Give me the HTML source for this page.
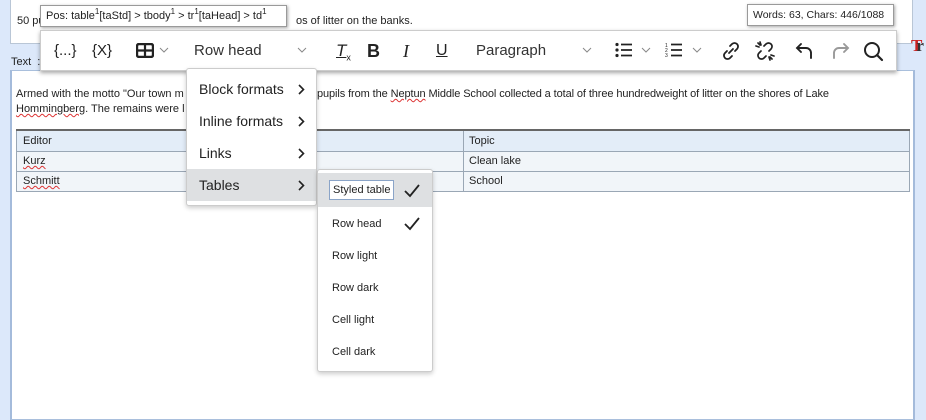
<!DOCTYPE html>
<html><head><meta charset="utf-8"><style>
*{box-sizing:border-box;margin:0;padding:0}
body{width:926px;height:416px;overflow:hidden;background:#dce8fa;font-family:"Liberation Sans",sans-serif;position:relative;color:#222}
.abs{position:absolute}
.top{left:10px;top:-2px;width:903px;height:46px;background:#fff;border:1px solid #b9c6d6}
.ed{left:10px;top:70px;width:905px;height:350px;background:#fff;border:1px solid #a9bfdc;border-left:2px solid #a4bbdb;border-right:2px solid #a4bbdb}
.s{font-size:11px;color:#222;white-space:nowrap}
.tip{background:#fff;border:1px solid #9a9a9a;box-shadow:1px 1px 3px rgba(0,0,0,.35);font-size:11px;padding:0 5px;height:22px;line-height:21px;white-space:nowrap}
.tip sup{font-size:8px;line-height:0;vertical-align:5px}
.tb{left:40px;top:30px;width:857px;height:41px;background:#fff;border:1px solid #ccc;box-shadow:0 2px 4px rgba(0,0,0,.35)}
.tb .i{position:absolute;top:0;height:40px;line-height:40px;font-size:15px;color:#222}
.sq{text-decoration:underline wavy #d33;text-decoration-thickness:1px}
table{border-collapse:collapse;font-size:11px}
.menu{background:#fff;border:1px solid #ccc;border-radius:3px;box-shadow:0 2px 5px rgba(0,0,0,.2)}
.mi{position:absolute;left:0;right:0;height:32px;line-height:32px;font-size:14px;color:#222;padding-left:12px}
.mi svg{position:absolute;right:11px;top:11px}
.si{position:absolute;left:0;right:0;height:32px;line-height:32px;font-size:11px;padding-left:14px}
</style></head><body>
<div class="abs top"></div>
<div class="abs s" style="left:17px;top:15px">50 pu</div>
<div class="abs s" style="left:296px;top:15px">os of litter on the banks.</div>
<div class="abs tip" style="left:40px;top:5px;width:247px">Pos: table<sup>1</sup>[taStd] &gt; tbody<sup>1</sup> &gt; tr<sup>1</sup>[taHead] &gt; td<sup>1</sup></div>
<div class="abs tip" style="left:747px;top:4px;width:147px;font-size:10.5px">Words: 63, Chars: 446/1088</div>
<div class="abs s" style="left:11px;top:56px">Text &nbsp;:</div>
<div class="abs ed"></div>
<div class="abs s" style="left:16px;top:88px">Armed with the motto "Our town m</div>
<div class="abs s" style="left:317px;top:88px;letter-spacing:-0.1px">pupils from the <span class="sq">Neptun</span> Middle School collected a total of three hundredweight of litter on the shores of Lake</div>
<div class="abs s" style="left:16px;top:103px"><span class="sq">Hommingberg</span>. The remains were l</div>
<table class="abs" style="left:16px;top:129px;width:894px">
<tr style="background:#e3edf8;height:21px"><td style="padding-left:6px;border:1px solid #9aa7b5;border-top:2px solid #666;width:447px">Editor</td><td style="padding-left:5px;border:1px solid #9aa7b5;border-top:2px solid #666">Topic</td></tr>
<tr style="background:#f1f5f9;height:20px"><td style="padding-left:6px;border:1px solid #9aa7b5"><span class="sq">Kurz</span></td><td style="padding-left:5px;border:1px solid #9aa7b5">Clean lake</td></tr>
<tr style="background:#f1f5f9;height:20px"><td style="padding-left:6px;border:1px solid #9aa7b5"><span class="sq">Schmitt</span></td><td style="padding-left:5px;border:1px solid #9aa7b5">School</td></tr>
</table>
<div class="abs" style="left:911px;top:36px;font:bold 17px 'Liberation Serif',serif;color:#c22">T<span style="color:#333;margin-left:-6px">r</span></div>
<div class="abs tb">
<span class="i" style="left:13px">{...}</span>
<span class="i" style="left:51px">{X}</span>
<svg class="abs" style="left:95px;top:12px" width="18" height="15"><rect x="1" y="1" width="16" height="13" rx="2" fill="none" stroke="#222" stroke-width="2.4"/><path d="M1 7.5H17M9 1V14" stroke="#222" stroke-width="2.2"/></svg>
<svg class="abs" style="left:118px;top:16px" width="10" height="7"><path d="M1 1l4 4 4-4" stroke="#888" fill="none"/></svg>
<span class="i" style="left:153px;color:#333">Row head</span>
<svg class="abs" style="left:256px;top:16px" width="10" height="7"><path d="M1 1l4 4 4-4" stroke="#888" fill="none"/></svg>
<span class="i" style="left:295px;font-style:italic;text-decoration:underline;font-size:17px">T<sub style="font-size:9px;font-style:normal">x</sub></span>
<span class="i" style="left:326px;font-weight:bold;font-size:18px">B</span>
<span class="i" style="left:362px;font-style:italic;font-size:18px;font-family:'Liberation Serif',serif">I</span>
<span class="i" style="left:395px;text-decoration:underline;font-size:16px">U</span>
<span class="i" style="left:435px;color:#333">Paragraph</span>
<svg class="abs" style="left:541px;top:16px" width="10" height="7"><path d="M1 1l4 4 4-4" stroke="#888" fill="none"/></svg>
<svg class="abs" style="left:574px;top:11px" width="18" height="16"><g fill="#222"><circle cx="2" cy="2.5" r="1.6"/><circle cx="2" cy="8" r="1.6"/><circle cx="2" cy="13.5" r="1.6"/></g><path d="M6 2.5h11M6 8h11M6 13.5h11" stroke="#222" stroke-width="1.8"/></svg>
<svg class="abs" style="left:600px;top:16px" width="10" height="7"><path d="M1 1l4 4 4-4" stroke="#888" fill="none"/></svg>
<svg class="abs" style="left:624px;top:11px" width="18" height="16"><text x="0" y="5" font-size="5" fill="#222">1</text><text x="0" y="10" font-size="5" fill="#222">2</text><text x="0" y="15" font-size="5" fill="#222">3</text><path d="M6 2.5h11M6 8h11M6 13.5h11" stroke="#222" stroke-width="1.8"/></svg>
<svg class="abs" style="left:651px;top:16px" width="10" height="7"><path d="M1 1l4 4 4-4" stroke="#888" fill="none"/></svg>
<svg class="abs" style="left:680px;top:10px" width="20" height="20"><path d="M8 12l4-4M9 5l2-2a3.5 3.5 0 015 5l-2 2M11 15l-2 2a3.5 3.5 0 01-5-5l2-2" stroke="#222" stroke-width="1.8" fill="none" stroke-linecap="round"/></svg>
<svg class="abs" style="left:713px;top:9px" width="22" height="22"><path d="M10 6l2-2a3.5 3.5 0 015 5l-2 2M12 16l-2 2a3.5 3.5 0 01-5-5l2-2M6 2l1 3M2 6l3 1M16 20l-1-3M20 16l-3-1M4 3l2 2M18 19l-2-2" stroke="#222" stroke-width="1.7" fill="none" stroke-linecap="round"/></svg>
<svg class="abs" style="left:754px;top:11px" width="20" height="18"><path d="M6 2L2 6l4 4M2 6h9a5 5 0 015 5v5" stroke="#222" stroke-width="1.9" fill="none" stroke-linecap="round"/></svg>
<svg class="abs" style="left:789px;top:11px" width="20" height="18"><path d="M14 2l4 4-4 4M18 6H9a5 5 0 00-5 5v5" stroke="#999" stroke-width="1.9" fill="none" stroke-linecap="round"/></svg>
<svg class="abs" style="left:822px;top:10px" width="22" height="22"><circle cx="9" cy="9" r="7" stroke="#222" stroke-width="2" fill="none"/><path d="M14 14l5 5" stroke="#222" stroke-width="2.2" stroke-linecap="round"/></svg>
</div>
<div class="abs menu" style="left:186px;top:68px;width:131px;height:138px">
<div class="mi" style="top:4px">Block formats<svg width="7" height="11"><path d="M1 1l4.5 4.5L1 10" stroke="#222" stroke-width="1.6" fill="none"/></svg></div>
<div class="mi" style="top:36px">Inline formats<svg width="7" height="11"><path d="M1 1l4.5 4.5L1 10" stroke="#222" stroke-width="1.6" fill="none"/></svg></div>
<div class="mi" style="top:68px">Links<svg width="7" height="11"><path d="M1 1l4.5 4.5L1 10" stroke="#222" stroke-width="1.6" fill="none"/></svg></div>
<div class="mi" style="top:100px;background:#dee0e2">Tables<svg width="7" height="11"><path d="M1 1l4.5 4.5L1 10" stroke="#222" stroke-width="1.6" fill="none"/></svg></div>
</div>
<div class="abs menu" style="left:317px;top:169px;width:116px;height:203px">
<div class="si" style="top:3px;height:34px;line-height:34px;background:#dee0e2;padding-left:11px"><span style="border:1px solid #8aa4c8;background:#fff;padding:3px 3px">Styled table</span></div>
<svg class="abs" style="left:86px;top:14px" width="16" height="14"><path d="M1 7l5 5 9-11" stroke="#222" stroke-width="1.8" fill="none"/></svg>
<div class="si" style="top:38px">Row head</div>
<svg class="abs" style="left:86px;top:47px" width="16" height="14"><path d="M1 7l5 5 9-11" stroke="#222" stroke-width="1.8" fill="none"/></svg>
<div class="si" style="top:70px">Row light</div>
<div class="si" style="top:102px">Row dark</div>
<div class="si" style="top:134px">Cell light</div>
<div class="si" style="top:166px">Cell dark</div>
</div>
</body></html>
